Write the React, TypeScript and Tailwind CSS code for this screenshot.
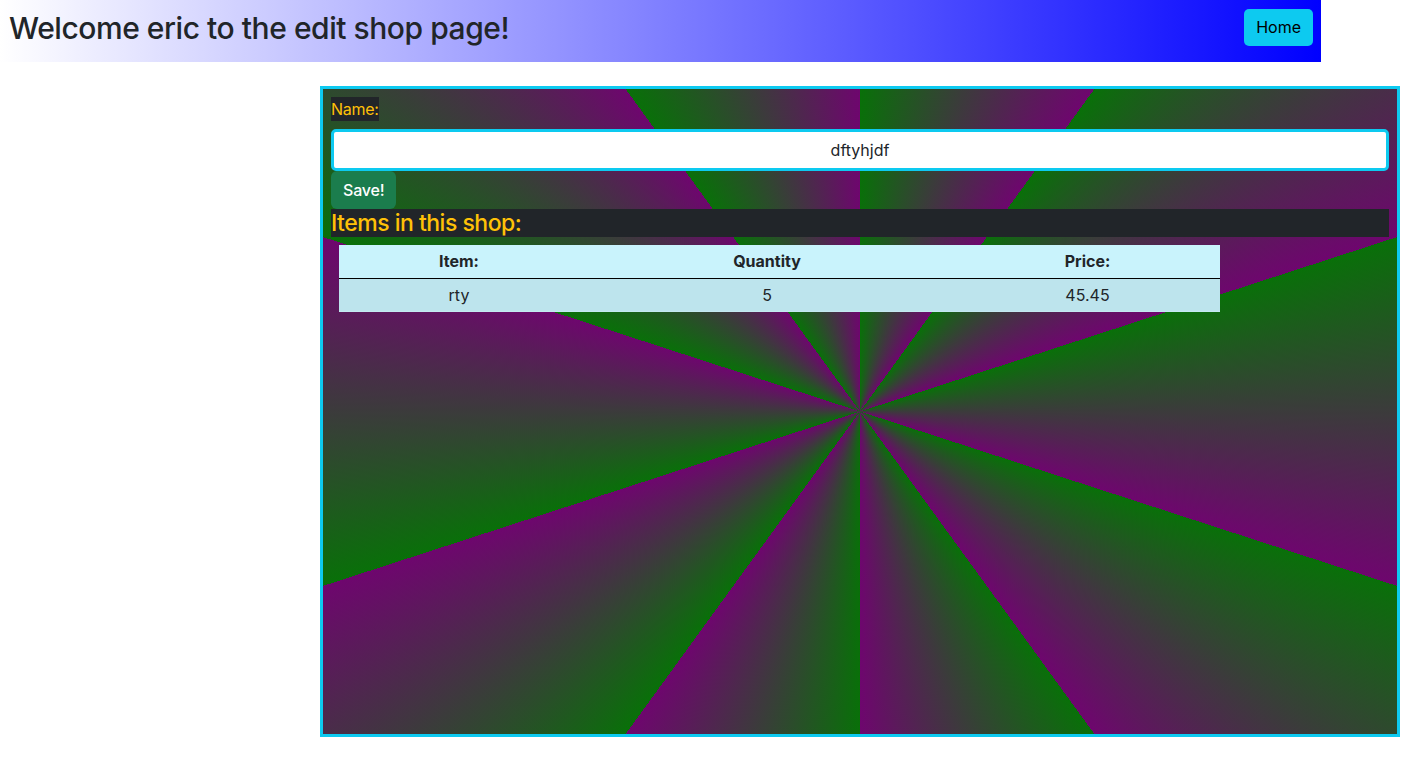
import { useState } from 'react';

type Item = { name: string; quantity: number; price: number };

const items: Item[] = [{ name: 'rty', quantity: 5, price: 45.45 }];

function App() {
    const [shopName, setShopName] = useState('dftyhjdf');

    return (
        <div className="min-h-screen bg-white font-['Inter','Liberation_Sans',sans-serif] text-base text-[#212529]">
            {/* header bar */}
            <div className="flex h-[62px] w-[1321px] items-center justify-between bg-[image:linear-gradient(to_right,#ffffff,#0000ff)] pl-[9px] pr-2">
                <h1 className="mb-[6px] text-[30px] font-medium leading-none tracking-[-0.45px]">Welcome eric to the edit shop page!</h1>
                <button className="mb-2 h-[37px] rounded-[5px] bg-[#0dcaf0] px-3 text-black">Home</button>
            </div>

            {/* edit panel */}
            <div className="ml-[320px] mt-6 h-[651px] w-[1080px] border-[3px] border-[#0dcaf0] bg-[image:repeating-conic-gradient(#097009_0deg,#6e066e_36deg)] p-2">
                <label className="mb-2 inline-block bg-[#212529] leading-6 tracking-[-0.3px] text-[#ffc107]">Name:</label>
                <input
                    className="block h-[42px] w-full rounded-[5px] border-[3px] border-[#0dcaf0] bg-white text-center text-[#212529] outline-none"
                    value={shopName}
                    onChange={e => setShopName(e.target.value)}
                />
                <button className="h-[38px] rounded-[6px] bg-[#1b7d4d] px-3 font-medium tracking-[-0.2px] text-white">Save!</button>
                <h4 className="bg-[#212529] text-[23px] font-medium leading-[28px] tracking-[-0.5px] text-[#ffc107]">Items in this shop:</h4>

                <div className="ml-2 mt-2 w-[881px]">
                    <table className="w-full table-fixed border-collapse text-center">
                        <thead>
                            <tr className="h-[33px] border-b border-black bg-[#c9f3fc]">
                                <th className="w-[240px] font-bold">Item:</th>
                                <th className="w-[376px] font-bold">Quantity</th>
                                <th className="font-bold">Price:</th>
                            </tr>
                        </thead>
                        <tbody>
                            {items.map((item, index) => (
                                <tr key={index} className="h-[33px] border-b border-[#c4e9f1] bg-[#bde4ed]">
                                    <td>{item.name}</td>
                                    <td>{item.quantity}</td>
                                    <td>{item.price}</td>
                                </tr>
                            ))}
                        </tbody>
                    </table>
                </div>
            </div>
        </div>
    );
}

export default App;
